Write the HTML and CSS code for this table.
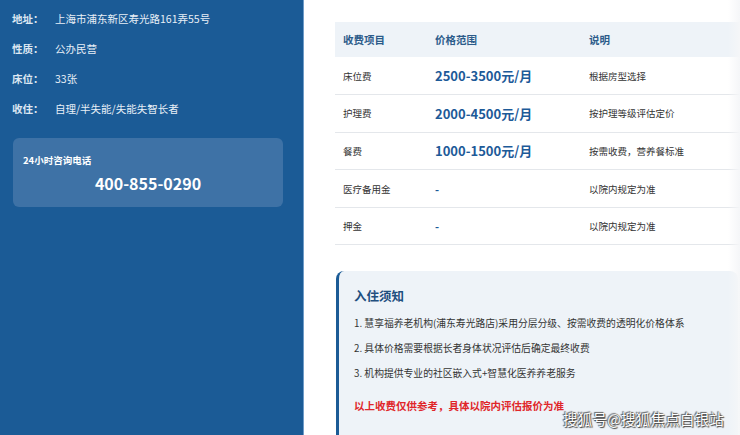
FILE: index.html
```html
<!DOCTYPE html>
<html lang="zh-CN">
<head>
<meta charset="utf-8">
<title>收费标准</title>
<link rel="stylesheet" href="styles.css">
</head>
<body>
<div class="page">
  <aside class="side">
    <div class="info">
      <div class="info-row"><span class="info-label">地址：</span><span class="info-value">上海市浦东新区寿光路161弄55号</span></div>
      <div class="info-row"><span class="info-label">性质：</span><span class="info-value">公办民营</span></div>
      <div class="info-row"><span class="info-label">床位：</span><span class="info-value">33张</span></div>
      <div class="info-row"><span class="info-label">收住：</span><span class="info-value">自理/半失能/失能失智长者</span></div>
    </div>
    <div class="hotline">
      <div class="hotline-label">24小时咨询电话</div>
      <div class="hotline-number">400-855-0290</div>
    </div>
  </aside>
  <main class="main">
    <table class="fees">
      <colgroup><col class="col1"><col class="col2"><col class="col3"></colgroup>
      <thead>
        <tr><th class="c1">收费项目</th><th>价格范围</th><th>说明</th></tr>
      </thead>
      <tbody>
        <tr><td class="c1">床位费</td><td class="price">2500-3500元/月</td><td>根据房型选择</td></tr>
        <tr><td class="c1">护理费</td><td class="price">2000-4500元/月</td><td>按护理等级评估定价</td></tr>
        <tr><td class="c1">餐费</td><td class="price">1000-1500元/月</td><td>按需收费，营养餐标准</td></tr>
        <tr><td class="c1">医疗备用金</td><td class="dash">-</td><td>以院内规定为准</td></tr>
        <tr><td class="c1">押金</td><td class="dash">-</td><td>以院内规定为准</td></tr>
      </tbody>
    </table>
    <section class="notice">
      <h3 class="notice-title">入住须知</h3>
      <ol class="notice-list">
        <li>1. 慧享福养老机构(浦东寿光路店)采用分层分级、按需收费的透明化价格体系</li>
        <li>2. 具体价格需要根据长者身体状况评估后确定最终收费</li>
        <li>3. 机构提供专业的社区嵌入式+智慧化医养养老服务</li>
      </ol>
      <p class="notice-warn">以上收费仅供参考，具体以院内评估报价为准</p>
    </section>
  </main>
  <div class="edge-fade"></div>
  <div class="watermark">搜狐号@搜狐焦点白银站</div>
</div>
</body>
</html>
```

FILE: styles.css
```css
* { box-sizing: border-box; }
html, body {
  margin: 0;
  padding: 0;
  background: #ffffff;
  font-family: "Noto Sans CJK SC", "Noto Sans", sans-serif;
}
.page {
  position: relative;
  display: flex;
  width: 740px;
  height: 435px;
  overflow: hidden;
}
.side {
  width: 304px;
  flex: none;
  background: #1b5b96;
  border-right: 1px solid #6f9cc8;
  padding: 3px 0 0 12px;
}
.info { display: flex; flex-direction: column; }
.info-row {
  display: flex;
  height: 30px;
  align-items: center;
  font-size: 10.5px;
  color: #e6eef6;
}
.info-label {
  width: 43px;
  font-weight: 700;
  color: #dce7f2;
}
.info-value { color: #e8eff6; }
.hotline {
  margin-top: 15px;
  margin-left: 1px;
  width: 270px;
  height: 69px;
  border-radius: 6px;
  background: #3e72a6;
  padding: 14px 10px 0 10px;
}
.hotline-label {
  font-size: 9.5px;
  line-height: 16px;
  font-weight: 700;
  color: #ffffff;
}
.hotline-number {
  margin-top: 4px;
  text-align: center;
  font-size: 16px;
  line-height: 22px;
  font-weight: 700;
  color: #ffffff;
}
.main {
  flex: none;
  width: 436px;
  padding: 22px 0 0 31px;
}
.fees {
  width: 405px;
  table-layout: fixed;
  border-collapse: collapse;
  font-size: 9.5px;
  color: #333333;
}
.col1 { width: 100px; }
.col2 { width: 154px; }
.col3 { width: 151px; }
.fees th {
  height: 35px;
  background: #eef3f8;
  text-align: left;
  font-size: 10.5px;
  font-weight: 700;
  color: #2c5b8a;
  padding: 0;
}
.fees td {
  height: 37.6px;
  border-bottom: 1px solid #e4e7eb;
  padding: 0;
}
.fees .c1 { padding-left: 8px; }
.price {
  font-size: 13px;
  font-weight: 700;
  color: #1d5a98;
}
.dash {
  font-size: 11px;
  font-weight: 700;
  color: #1d5a98;
}
.notice {
  margin-top: 26px;
  margin-left: 1px;
  width: 402px;
  height: 200px;
  background: #eef3f8;
  border-left: 3px solid #1b5b96;
  border-radius: 8px 8px 0 0;
  padding: 16px 0 0 15px;
}
.notice-title {
  margin: 0;
  font-size: 12.5px;
  line-height: 18px;
  font-weight: 700;
  color: #1f4f7f;
}
.notice-list {
  list-style: none;
  margin: 6px 0 0 0;
  padding: 0;
  font-size: 9.8px;
  line-height: 25px;
  color: #333333;
}
.notice-warn {
  margin: 10px 0 0 0;
  font-size: 10.5px;
  line-height: 20px;
  font-weight: 700;
  color: #e0262a;
}
.edge-fade {
  position: absolute;
  top: 0;
  right: 0;
  bottom: 0;
  width: 12px;
  background: linear-gradient(to right, rgba(245,246,248,0), rgba(245,246,248,1));
}
.watermark {
  position: absolute;
  right: 16px;
  top: 409px;
  font-size: 14.5px;
  line-height: 20px;
  color: #ffffff;
  letter-spacing: 0.2px;
  text-shadow: 0 0 1px #333, 1px 1px 1px #444, -1px -1px 1px #666;
}
```
